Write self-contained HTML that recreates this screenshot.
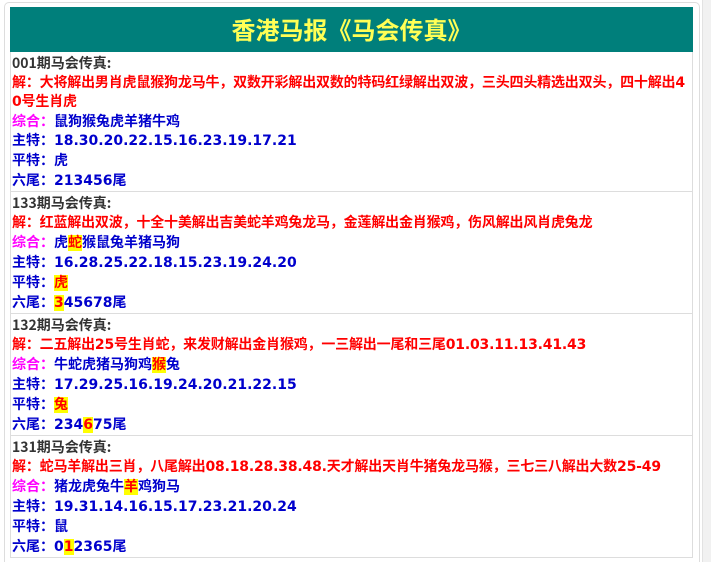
<!DOCTYPE html>
<html><head><meta charset="utf-8"><style>
html,body{margin:0;padding:0;background:#fff;width:711px;height:562px;overflow:hidden}
body{font-family:"DejaVu Sans","Noto Sans CJK SC",sans-serif;font-size:14px;font-weight:bold;position:relative}
.rbar{position:absolute;left:702px;top:0;width:8px;height:562px;background:#f1f1f1;border-left:1px solid #e2e2e2}
.card{position:absolute;left:4px;top:2px;width:694px;height:559px;border:1px solid #ddd;border-bottom:none;border-radius:5px 5px 0 0;background:#fff}
.wrap{position:absolute;left:10px;top:7px;width:683px;height:555px;overflow:hidden}
.hd{background:#007f7b;height:45px;color:#ffff55;font-size:24px;text-align:center;line-height:43px;font-family:"Noto Sans CJK SC",sans-serif;font-weight:bold}
.sec{border-left:1px solid #ddd;border-right:1px solid #ddd;border-bottom:1px solid #ddd;padding:1px 0 0 1px;line-height:20px;word-break:break-all}
.sec.first{padding-top:2px;line-height:19.6px}
.t{color:#333;font-family:"Noto Sans CJK SC",sans-serif;font-weight:bold}
.r{color:#f00;letter-spacing:-0.18px}.b{color:#00c}.m{color:#f0f}
.h{background:#ff0;color:#f00}
</style></head><body>
<div class="rbar"></div>
<div class="card"></div>
<div class="wrap">
<div class="hd">香港马报《马会传真》</div>
<div class="sec first">
<div class="t">001期马会传真:</div>
<div class="r">解：大将解出男肖虎鼠猴狗龙马牛，双数开彩解出双数的特码红绿解出双波，三头四头精选出双头，四十解出40号生肖虎</div>
<div class="b"><span class="m">综合：</span>鼠狗猴兔虎羊猪牛鸡</div>
<div class="b">主特：18.30.20.22.15.16.23.19.17.21</div>
<div class="b">平特：虎</div>
<div class="b">六尾：213456尾</div>
</div>
<div class="sec">
<div class="t">133期马会传真:</div>
<div class="r">解：红蓝解出双波，十全十美解出吉美蛇羊鸡兔龙马，金莲解出金肖猴鸡，伤风解出风肖虎兔龙</div>
<div class="b"><span class="m">综合：</span>虎<span class="h">蛇</span>猴鼠兔羊猪马狗</div>
<div class="b">主特：16.28.25.22.18.15.23.19.24.20</div>
<div class="b">平特：<span class="h">虎</span></div>
<div class="b">六尾：<span class="h">3</span>45678尾</div>
</div>
<div class="sec">
<div class="t">132期马会传真:</div>
<div class="r">解：二五解出25号生肖蛇，来发财解出金肖猴鸡，一三解出一尾和三尾01.03.11.13.41.43</div>
<div class="b"><span class="m">综合：</span>牛蛇虎猪马狗鸡<span class="h">猴</span>兔</div>
<div class="b">主特：17.29.25.16.19.24.20.21.22.15</div>
<div class="b">平特：<span class="h">兔</span></div>
<div class="b">六尾：234<span class="h">6</span>75尾</div>
</div>
<div class="sec">
<div class="t">131期马会传真:</div>
<div class="r">解：蛇马羊解出三肖，八尾解出08.18.28.38.48.天才解出天肖牛猪兔龙马猴，三七三八解出大数25-49</div>
<div class="b"><span class="m">综合：</span>猪龙虎兔牛<span class="h">羊</span>鸡狗马</div>
<div class="b">主特：19.31.14.16.15.17.23.21.20.24</div>
<div class="b">平特：鼠</div>
<div class="b">六尾：0<span class="h">1</span>2365尾</div>
</div>
</div>
</body></html>
